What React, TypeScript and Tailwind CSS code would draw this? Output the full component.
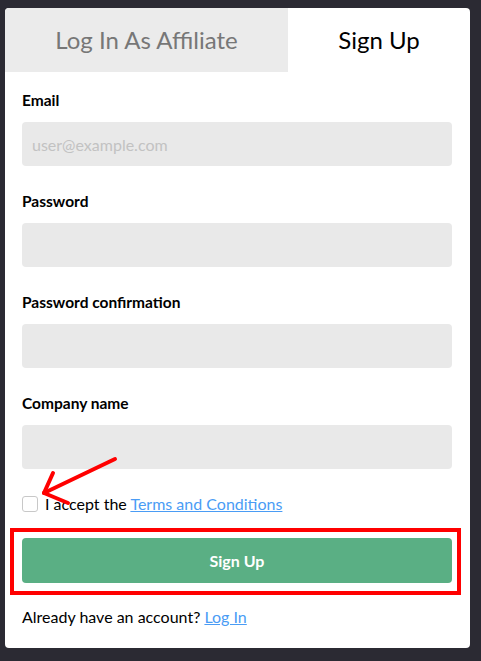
import React from 'react';

const fields = [
  { label: 'Email', placeholder: 'user@example.com', type: 'email' },
  { label: 'Password', placeholder: '', type: 'password' },
  { label: 'Password confirmation', placeholder: '', type: 'password' },
  { label: 'Company name', placeholder: '', type: 'text' },
];

export default function App() {
  return (
    <div className="relative min-h-screen bg-[#2b2a33] pl-[5px] pr-[11px] pt-[8px] pb-[13px] font-['Lato',sans-serif]">
      <div className="bg-white rounded-[4px] overflow-hidden h-[640px]">
        {/* Tabs */}
        <div className="flex h-[64px]">
          <div className="w-[283px] bg-[#ebebeb] flex items-center justify-center text-[24px] text-[#777]">
            Log In As Affiliate
          </div>
          <div className="flex-1 flex items-center justify-center text-[24px] text-black">
            Sign Up
          </div>
        </div>

        <div className="flex flex-col pl-[17px] pr-[18px] pt-[18px]">
          {fields.map((f) => (
            <div key={f.label} className="mb-[25px]">
              <label className="block text-[15.5px] font-bold text-black leading-[20px] mb-[12px]">
                {f.label}
              </label>
              <input
                type={f.type}
                placeholder={f.placeholder}
                className="w-full h-[44px] rounded-[4px] bg-[#e9e9e9] px-[10px] text-[16px] placeholder:text-[#c2c2c2] outline-none"
              />
            </div>
          ))}

          {/* Terms */}
          <div className="flex items-center gap-[7px] mt-[2px] h-[16px]">
            <span className="w-[16px] h-[16px] rounded-[3px] border border-[#c8c8c8] bg-white shrink-0" />
            <span className="text-[16px] text-black">
              I accept the{' '}
              <a href="#" className="text-[#4a9cf5] underline">
                Terms and Conditions
              </a>
            </span>
          </div>

          <button className="mt-[26px] w-full h-[45px] rounded-[4px] bg-[#5aaf84] text-white font-bold text-[16px]">
            Sign Up
          </button>

          <p className="mt-[22px] text-[16px] leading-[24px] text-black">
            Already have an account?{' '}
            <a href="#" className="text-[#4a9cf5] underline">
              Log In
            </a>
          </p>
        </div>
      </div>

      {/* Annotations */}
      <div className="absolute left-[10px] top-[528px] w-[451px] h-[67px] border-[4px] border-[#ff0000] pointer-events-none" />
      <svg className="absolute left-0 top-0 pointer-events-none" width="481" height="661">
        <g stroke="#ff0000" strokeWidth="4" strokeLinecap="round" fill="none">
          <line x1="115" y1="459" x2="44" y2="493" />
          <line x1="44" y1="493" x2="53" y2="473" />
          <line x1="44" y1="493" x2="68" y2="503" />
        </g>
      </svg>
    </div>
  );
}
